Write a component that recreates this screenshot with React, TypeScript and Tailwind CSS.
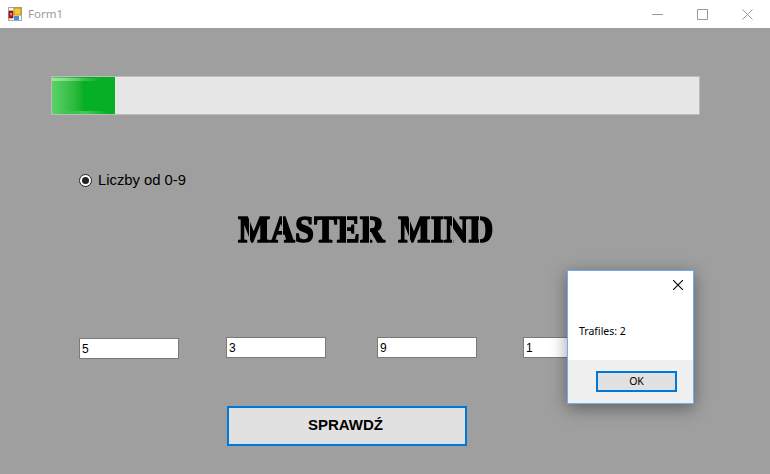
function FormIcon() {
  return (
    <svg width="14" height="14" viewBox="0 0 14 14" className="shrink-0">
      <rect x="0.5" y="0.5" width="13" height="13" fill="#f6f6f6" stroke="#a8a8a8" />
      <rect x="1" y="4" width="4" height="7" fill="#c01010" stroke="#801010" strokeWidth="0.6" />
      <rect x="2.4" y="6" width="1.4" height="2.4" fill="#f0c0c0" />
      <rect x="6" y="1" width="7" height="7" fill="#f8c830" stroke="#b08010" strokeWidth="0.8" />
      <rect x="6" y="9" width="5" height="4" fill="#4a8ee0" />
    </svg>
  );
}

function CaptionButton({ d }: { d: string }) {
  return (
    <div className="flex h-[28px] w-[45px] items-center justify-center">
      <svg width="11" height="11" viewBox="0 0 11 11" fill="none" stroke="#999999" strokeWidth="1">
        <path d={d} />
      </svg>
    </div>
  );
}

function NumberBox({ value, className }: { value: string; className: string }) {
  return (
    <input
      readOnly
      value={value}
      className={`h-[21px] w-[100px] border border-[#7a7a7a] bg-white px-[2px] text-[12px] text-black outline-none ${className}`}
    />
  );
}

export default function App() {
  return (
    <div className="relative flex h-[474px] w-[770px] flex-col overflow-hidden bg-[#9f9f9f] font-['Liberation_Sans',sans-serif]">
      {/* title bar */}
      <div className="flex h-[28px] shrink-0 items-center bg-white pl-2">
        <FormIcon />
        <span className="ml-[6px] font-['Noto_Sans',sans-serif] text-[11.5px] text-[#9a9a9a]">Form1</span>
        <div className="ml-auto flex items-center">
          <CaptionButton d="M0 5.5H11" />
          <CaptionButton d="M0.5 0.5H10.5V10.5H0.5Z" />
          <CaptionButton d="M0.5 0.5L10.5 10.5M10.5 0.5L0.5 10.5" />
        </div>
      </div>

      <div className="flex flex-1 flex-col pt-[48px]">
        {/* progress */}
        <div className="ml-[51px] h-[39px] w-[649px] border border-[#bcbcbc] bg-[#e6e6e6]">
          <div className="relative h-full w-[63px] overflow-hidden bg-gradient-to-r from-[#5ad268] via-[#06b025] via-50% to-[#06b025]">
            <div className="absolute left-0 top-[1px] h-[3px] w-[48px] bg-gradient-to-r from-[#9ae6a2] to-transparent" />
            <div className="absolute bottom-0 left-[8px] h-[3px] w-[48px] bg-gradient-to-r from-transparent via-[#48c860] to-transparent" />
          </div>
        </div>

        {/* radio */}
        <label className="ml-[79px] mt-[57px] flex h-[16px] items-center text-[14.8px] text-black">
          <span className="flex h-[13px] w-[13px] items-center justify-center rounded-full border border-[#222222] bg-white">
            <span className="h-[7px] w-[7px] rounded-full bg-[#222222]" />
          </span>
          <span className="ml-[6px]">Liczby od 0-9</span>
        </label>

        {/* heading, the gradient cuts the stencil gaps */}
        <h1 className="ml-[238px] mt-[20px] h-[44px] w-[260px] scale-y-[1.12] bg-[linear-gradient(90deg,#000_0,#000_11px,#9f9f9f_11px,#9f9f9f_12px,#000_12px,#000_44px,#9f9f9f_44px,#9f9f9f_45px,#000_45px,#000_108px,#9f9f9f_108px,#9f9f9f_109px,#000_109px,#000_131px,#9f9f9f_131px,#9f9f9f_132px,#000_132px,#000_171px,#9f9f9f_171px,#9f9f9f_172px,#000_172px,#000_214px,#9f9f9f_214px,#9f9f9f_215px,#000_215px,#000_241px,#9f9f9f_241px,#9f9f9f_242px,#000_242px)] bg-clip-text font-['Liberation_Serif',serif] text-[34px] font-bold leading-[44px] tracking-[0.2px] text-transparent [word-spacing:5px] [-webkit-text-stroke:1.5px_transparent]">
          MASTER MIND
        </h1>

        {/* number boxes */}
        <div className="ml-[79px] mt-[85px] flex items-start">
          <NumberBox value="5" className="mt-[1px]" />
          <NumberBox value="3" className="ml-[47px]" />
          <NumberBox value="9" className="ml-[51px]" />
          <NumberBox value="1" className="ml-[46px]" />
        </div>

        <button className="ml-[227px] mt-[47px] h-[40px] w-[240px] border-2 border-[#0078d7] bg-[#e1e1e1] pb-[2px] pr-[3px] text-[15px] font-bold text-black">
          SPRAWDŹ
        </button>
      </div>

      {/* message box */}
      <div className="absolute left-[567px] top-[270px] flex h-[134px] w-[127px] flex-col border border-[#70aef0] bg-white shadow-[0_4px_16px_rgba(0,0,0,0.4)]">
        <div className="flex flex-1 flex-col">
          <svg width="10" height="10" viewBox="0 0 10 10" stroke="#000000" strokeWidth="1.1" className="ml-auto mr-[10px] mt-[9px]">
            <path d="M0 0L10 10M10 0L0 10" />
          </svg>
          <span className="ml-[11px] mt-[34px] font-['Noto_Sans',sans-serif] text-[10.5px] text-black">Trafiles: 2</span>
        </div>
        <div className="flex h-[43px] items-center justify-end bg-[#f0f0f0] pr-[16px]">
          <button className="h-[21px] w-[81px] border-2 border-[#0078d7] bg-[#e1e1e1] font-['Noto_Sans',sans-serif] text-[10.5px] text-black">
            OK
          </button>
        </div>
      </div>
    </div>
  );
}
